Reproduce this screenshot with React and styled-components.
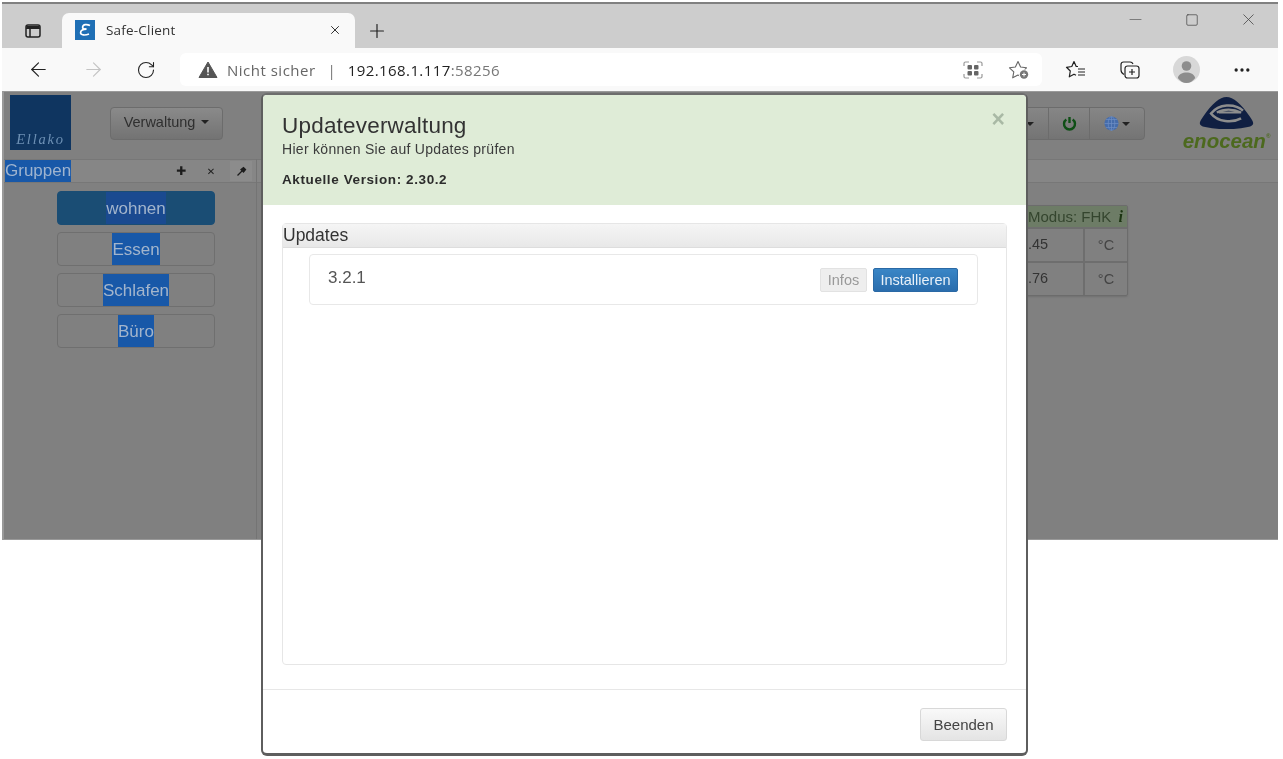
import styled, { createGlobalStyle } from "styled-components";
import { ArrowLeft, ArrowRight, RotateCw, Plus, X, Minus, Square, MoreHorizontal } from "lucide-react";

const GlobalStyle = createGlobalStyle`
  html, body { margin: 0; padding: 0; background: #fff; }
  body { font-family: "Liberation Sans", Arial, sans-serif; }
  * { box-sizing: border-box; }
`;

const groups = [
  { name: "wohnen", active: true },
  { name: "Essen" },
  { name: "Schlafen" },
  { name: "Büro" },
];

const SidebarIcon = () => (
  <svg width="16" height="14" viewBox="0 0 16 14" fill="none" stroke="#222" strokeWidth="1.5">
    <rect x="1" y="1" width="14" height="12" rx="2" />
    <path d="M1 4.2h14M5 4.2V13" />
    <path d="M1.5 2h13v2h-13z" fill="#222" stroke="none" />
  </svg>
);

const TabLogo = () => (
  <svg width="20" height="20" viewBox="0 0 20 20">
    <rect width="20" height="20" fill="#1f6fb5" />
    <path d="M15 5.5C12 4 8 4.2 7.600 7c-.2 1.600 1.400 2.300 3.900 2.200C8.200 9.300 5.500 10.300 5.600 12.800 5.700 15.300 10 15.600 14 14" fill="none" stroke="#fff" strokeWidth="1.700" />
  </svg>
);

const WarnIcon = () => (
  <svg width="20" height="17" viewBox="0 0 19 17">
    <path d="M9.500 1 18.500 16.500H.5z" fill="#555" stroke="#555" strokeLinejoin="round" />
    <path d="M9.500 6v5.500M9.500 12.800v1.500" stroke="#fff" strokeWidth="1.600" />
  </svg>
);

const ReaderIcon = () => (
  <svg width="20" height="18" viewBox="0 0 20 18" fill="none">
    <path d="M1 5V2.500C1 1.700 1.700 1 2.500 1H6M14 1h3.500c.8 0 1.500.7 1.500 1.500V5M1 13v2.500c0 .8.7 1.500 1.500 1.500H6M14 17h3.500c.8 0 1.500-.7 1.500-1.500V13" stroke="#999" strokeWidth="1.200" />
    <rect x="4.500" y="4" width="4.500" height="4.500" rx="1" fill="#666" />
    <rect x="11" y="4" width="4.500" height="4.500" rx="1" fill="#666" />
    <rect x="4.500" y="10" width="4.500" height="4.500" rx="1" fill="#666" />
    <rect x="11" y="10" width="4.500" height="4.500" rx="1" fill="#666" />
  </svg>
);

const StarAddIcon = () => (
  <svg width="22" height="20" viewBox="0 0 22 20" fill="none">
    <path d="M10 1.500 12.600 7 18.500 7.800 14.200 11.900 15.300 17.800 10 15 4.700 17.800 5.800 11.900 1.500 7.800 7.400 7z" stroke="#666" strokeWidth="1.100" strokeLinejoin="round" />
    <circle cx="16" cy="14.500" r="5.200" fill="#fff" />
    <circle cx="16" cy="14.500" r="4.200" fill="#777" />
    <path d="M14 14.500h4M16 12.500v4" stroke="#fff" strokeWidth="1" />
  </svg>
);

const FavoritesIcon = () => (
  <svg width="22" height="20" viewBox="0 0 22 20" fill="none" stroke="#222" strokeWidth="1.200" strokeLinejoin="round">
    <path d="M13 6.500H11.200L9 1.500 6.800 6.500 1.500 7.300 5.300 11 4.300 16.800 9 14.200 11 15.300" />
    <path d="M13 9h7M13 12h7M13 15h7" />
  </svg>
);

const CollectionsIcon = () => (
  <svg width="22" height="20" viewBox="0 0 22 20" fill="none" stroke="#222" strokeWidth="1.200">
    <path d="M5 14.500C3 13.500 2 12 2 10V4.500C2 3 3 2 4.500 2H11c1.500 0 2.500.7 3 2" />
    <rect x="6" y="6" width="14" height="12" rx="2.500" />
    <path d="M13 9v6M10 12h6" />
  </svg>
);

const Avatar = () => (
  <svg width="27" height="27" viewBox="0 0 27 27">
    <circle cx="13.500" cy="13.500" r="13.500" fill="#d8d8d8" />
    <circle cx="13.500" cy="10" r="4.800" fill="#8d8d8d" />
    <path d="M4.800 22c1-4 4.700-5.500 8.700-5.500s7.700 1.500 8.700 5.500c-2.200 3-5.400 5-8.700 5s-6.500-2-8.700-5z" fill="#8d8d8d" />
  </svg>
);

const PowerIcon = () => (
  <svg width="15" height="15" viewBox="0 0 15 15" fill="none" stroke="#0f4f16" strokeWidth="2.400">
    <path d="M4.300 3.500a5.500 5.500 0 1 0 6.400 0" />
    <path d="M7.500 1v6" />
  </svg>
);

const GlobeIcon = () => (
  <svg width="15" height="15" viewBox="0 0 15 15">
    <circle cx="7.500" cy="7.500" r="7" fill="#456cab" />
    <path d="M.5 7.500h14M7.500.5v14M2 3.500h11M2 11.500h11" stroke="#6f8fc4" strokeWidth=".7" />
    <ellipse cx="7.500" cy="7.500" rx="3.300" ry="7" fill="none" stroke="#6f8fc4" strokeWidth=".7" />
  </svg>
);

const PinIcon = () => (
  <svg width="11" height="11" viewBox="0 0 11 11" fill="none" stroke="#1c1c1c" strokeWidth="1.300">
    <path d="M1.500 9.500 6 5" />
    <path d="M5 3.500 7.500 6 9.500 3.500 7.500 1.500z" fill="#1c1c1c" />
  </svg>
);

const EnoceanMark = () => (
  <svg width="59" height="32" viewBox="0 0 60 33">
    <path d="M30 0C37 0 45 7 54 20c5 7 5 9-2 11-14 3-30 3-44 0-7-2-7-4-2-11C15 7 23 0 30 0z" fill="#101f42" />
    <path d="M47 14C38 6 22 7 14 17c7 9 22 10 31 5" fill="none" stroke="#8d8d8d" strokeWidth="2.600" />
    <path d="M20 16c7-4 17-4 25 0H22" fill="none" stroke="#8d8d8d" strokeWidth="2.200" />
  </svg>
);

export default function App() {
  return (
    <>
      <GlobalStyle />
      <Stage>
        <BrowserWindow>
          <TitleBar>
            <SidebarToggle><SidebarIcon /></SidebarToggle>
            <Tab>
              <TabLogo />
              <TabTitle>Safe-Client</TabTitle>
              <X size={14} strokeWidth={1.6} color="#222" />
            </Tab>
            <NewTab><Plus size={22} strokeWidth={1.3} color="#222" /></NewTab>
            <WindowControls>
              <Minus size={19} strokeWidth={1} color="#666" />
              <Square size={14} strokeWidth={1.1} color="#333" />
              <X size={19} strokeWidth={1} color="#444" />
            </WindowControls>
          </TitleBar>

          <Toolbar>
            <NavButtons>
              <ArrowLeft size={23} strokeWidth={1.2} color="#222" />
              <ArrowRight size={23} strokeWidth={1.2} color="#c4c4c4" />
              <RotateCw size={20} strokeWidth={1.3} color="#222" />
            </NavButtons>
            <AddressBar>
              <WarnIcon />
              <NotSecure>Nicht sicher</NotSecure>
              <Divider>|</Divider>
              <Url>192.168.1.117<UrlPort>:58256</UrlPort></Url>
              <AddressIcons>
                <ReaderIcon />
                <StarAddIcon />
              </AddressIcons>
            </AddressBar>
            <ToolIcons>
              <FavoritesIcon />
              <CollectionsIcon />
              <Avatar />
              <MoreHorizontal size={20} strokeWidth={2} color="#222" />
            </ToolIcons>
          </Toolbar>

          <Page>
            <PageHeader>
              <LogoBox><LogoText>Ellako</LogoText></LogoBox>
              <DropButton>Verwaltung <Caret /></DropButton>
              <HeaderRight>
                <ButtonGroup>
                  <GroupPart $w={36}><Caret /></GroupPart>
                  <GroupPart $w={41}><PowerIcon /></GroupPart>
                  <GroupPart $w={55}><GlobeIcon /><Caret /></GroupPart>
                </ButtonGroup>
                <Enocean>
                  <EnoceanMark />
                  <EnoceanText>enocean<sup>®</sup></EnoceanText>
                </Enocean>
              </HeaderRight>
            </PageHeader>

            <Columns>
              <GroupPanel>
                <PanelBar>
                  <Selected>Gruppen</Selected>
                  <PanelTools>
                    <ToolGlyph $bold>✚</ToolGlyph>
                    <ToolGlyph>✕</ToolGlyph>
                    <ToolGlyph $boxed><PinIcon /></ToolGlyph>
                  </PanelTools>
                </PanelBar>
                <GroupList>
                  {groups.map((g) => (
                    <GroupButton key={g.name} $active={g.active}>
                      <GroupLabel $active={g.active}>{g.name}</GroupLabel>
                    </GroupButton>
                  ))}
                </GroupList>
              </GroupPanel>

              <RightPanel>
                <RightBar />
                <Table>
                  <ModeRow>Modus: FHK <InfoMark>i</InfoMark></ModeRow>
                  <ValueRow><Value>.45</Value><UnitCell>°C</UnitCell></ValueRow>
                  <ValueRow><Value>.76</Value><UnitCell>°C</UnitCell></ValueRow>
                </Table>
              </RightPanel>
            </Columns>
          </Page>
        </BrowserWindow>

        <Modal>
          <ModalHeader>
            <CloseMark>×</CloseMark>
            <ModalTitle>Updateverwaltung</ModalTitle>
            <ModalSub>Hier können Sie auf Updates prüfen</ModalSub>
            <VersionLine>Aktuelle Version: 2.30.2</VersionLine>
          </ModalHeader>
          <ModalBody>
            <UpdatesPanel>
              <UpdatesHeading>Updates</UpdatesHeading>
              <UpdateItem>
                <VersionName>3.2.1</VersionName>
                <ItemActions>
                  <InfoButton>Infos</InfoButton>
                  <InstallButton>Installieren</InstallButton>
                </ItemActions>
              </UpdateItem>
            </UpdatesPanel>
          </ModalBody>
          <ModalFooter>
            <QuitButton>Beenden</QuitButton>
          </ModalFooter>
        </Modal>
      </Stage>
    </>
  );
}

const Stage = styled.div`
  position: relative;
  width: 1283px;
  height: 759px;
  overflow: hidden;
  background: #fff;
  padding: 2px 0 0 2px;
  filter: blur(0.35px);
`;

const BrowserWindow = styled.div`
  width: 1276px;
  height: 538px;
  display: flex;
  flex-direction: column;
  border-top: 2px solid #808080;
`;

const TitleBar = styled.div`
  height: 44px;
  background: #cdcdcd;
  display: flex;
  align-items: flex-end;
  padding-left: 23px;
`;

const SidebarToggle = styled.div`
  width: 37px;
  height: 35px;
  display: flex;
  align-items: center;
`;

const Tab = styled.div`
  width: 293px;
  height: 35px;
  background: #f9f9f9;
  border-radius: 7px 7px 0 0;
  display: flex;
  align-items: center;
  padding: 0 13px 2px 13px;
  color: #333;
`;

const TabTitle = styled.span`
  flex: 1;
  margin-left: 11px;
  font: 13.500px "Open Sans", sans-serif;
  letter-spacing: 0.2px;
`;

const NewTab = styled.div`
  width: 44px;
  height: 35px;
  display: flex;
  align-items: center;
  justify-content: center;
`;

const WindowControls = styled.div`
  margin-left: auto;
  align-self: flex-start;
  width: 168px;
  height: 31px;
  padding: 0 20px 0 16px;
  display: flex;
  align-items: center;
  justify-content: space-between;
`;

const Toolbar = styled.div`
  height: 43px;
  background: #f9f9f9;
  display: flex;
  align-items: center;
`;

const NavButtons = styled.div`
  width: 178px;
  padding: 0 24px 0 25px;
  display: flex;
  align-items: center;
  justify-content: space-between;
`;

const AddressBar = styled.div`
  width: 862px;
  height: 33px;
  background: #fff;
  border-radius: 6px;
  display: flex;
  align-items: center;
  padding: 0 12px 0 18px;
`;

const NotSecure = styled.span`
  margin-left: 9px;
  font: 15px "Open Sans", sans-serif;
  letter-spacing: 0.5px;
  color: #666;
`;

const Divider = styled.span`
  margin: 0 12px 0 12px;
  font: 15px "Open Sans", sans-serif;
  color: #777;
`;

const Url = styled.span`
  font: 15px "Open Sans", sans-serif;
  letter-spacing: 0.4px;
  color: #222;
`;

const UrlPort = styled.span`
  color: #777;
`;

const AddressIcons = styled.div`
  margin-left: auto;
  width: 67px;
  display: flex;
  align-items: center;
  justify-content: space-between;
`;

const ToolIcons = styled.div`
  flex: 1;
  padding-left: 23px;
  display: flex;
  align-items: center;
  gap: 32px;
`;

const Page = styled.div`
  flex: 1;
  background: #808080;
  border-top: 1px solid #9a9a9a;
  border-bottom: 1px solid #999;
  border-left: 2px solid #999;
  display: flex;
  flex-direction: column;
  min-height: 0;
`;

const PageHeader = styled.div`
  height: 67px;
  padding: 3px 8px 0 6px;
  display: flex;
  align-items: flex-start;
`;

const LogoBox = styled.div`
  width: 61px;
  height: 55px;
  background: #0f3560;
  display: flex;
  align-items: flex-end;
  justify-content: center;
  padding-bottom: 2px;
`;

const LogoText = styled.span`
  font: italic 14.500px "Liberation Serif", serif;
  letter-spacing: 1.800px;
  color: #6d90b4;
`;

const DropButton = styled.div`
  margin: 12px 0 0 39px;
  width: 113px;
  height: 33px;
  border: 1px solid #6c6c6c;
  border-radius: 4px;
  background: linear-gradient(#8a8a8a, #737373);
  display: flex;
  align-items: center;
  justify-content: center;
  gap: 6px;
  padding-bottom: 3px;
  font-size: 14.500px;
  color: #2f2f2f;
`;

const Caret = styled.span`
  display: inline-block;
  border-top: 4px solid #222;
  border-left: 4px solid transparent;
  border-right: 4px solid transparent;
`;

const HeaderRight = styled.div`
  margin-left: auto;
  display: flex;
  align-items: flex-start;
`;

const ButtonGroup = styled.div`
  margin-top: 12px;
  height: 33px;
  display: flex;
  border: 1px solid #6c6c6c;
  border-radius: 4px;
  background: linear-gradient(#868686, #747474);
`;

const GroupPart = styled.div`
  width: ${(p) => p.$w}px;
  display: flex;
  align-items: center;
  justify-content: center;
  gap: 3px;
  & + & {
    border-left: 1px solid #6c6c6c;
  }
`;

const Enocean = styled.div`
  width: 87px;
  margin-left: 38px;
  display: flex;
  flex-direction: column;
  align-items: center;
  padding-top: 2px;
`;

const EnoceanText = styled.div`
  margin-top: 2px;
  font: italic bold 20.500px "Liberation Sans", sans-serif;
  line-height: 19px;
  color: #4c691e;
  white-space: nowrap;
  sup {
    font-size: 6px;
    vertical-align: top;
    line-height: 10px;
  }
`;

const Columns = styled.div`
  flex: 1;
  display: flex;
  min-height: 0;
`;

const GroupPanel = styled.div`
  width: 253px;
  border-right: 1px solid #747474;
`;

const PanelBar = styled.div`
  height: 24px;
  background: #868686;
  border-top: 1px solid #777;
  border-bottom: 1px solid #777;
  display: flex;
  align-items: center;
  padding-left: 1px;
`;

const Selected = styled.span`
  background: #1858a8;
  color: #9fb4cf;
  font-size: 17px;
  line-height: 22px;
  width: 66px;
  white-space: nowrap;
  overflow: hidden;
`;

const PanelTools = styled.div`
  margin-left: auto;
  display: flex;
  align-items: center;
  gap: 8px;
  padding-right: 4px;
`;

const ToolGlyph = styled.span`
  width: 22px;
  height: 20px;
  display: flex;
  align-items: center;
  justify-content: center;
  font: ${(p) => (p.$bold ? "12px" : "10px")} "DejaVu Sans", sans-serif;
  color: #1c1c1c;
  background: ${(p) => (p.$boxed ? "#8c8c8c" : "transparent")};
`;

const GroupList = styled.div`
  margin: 8px 41px 0 53px;
  display: flex;
  flex-direction: column;
  gap: 7px;
`;

const GroupButton = styled.div`
  height: 34px;
  border: 1px solid ${(p) => (p.$active ? "#1a4d74" : "#6f6f6f")};
  border-radius: 4px;
  background: ${(p) => (p.$active ? "#1a4d74" : "#808080")};
  display: flex;
  align-items: stretch;
  justify-content: center;
`;

const GroupLabel = styled.span`
  background: ${(p) => (p.$active ? "#1a4a90" : "#1858a8")};
  color: #a3b5cc;
  font-size: 17px;
  line-height: 33px;
`;

const RightPanel = styled.div`
  flex: 1;
  display: flex;
  flex-direction: column;
  align-items: flex-end;
`;

const RightBar = styled.div`
  width: 100%;
  height: 24px;
  background: #868686;
  border-top: 1px solid #777;
  border-bottom: 1px solid #777;
`;

const Table = styled.div`
  width: 340px;
  margin: 22px 150px 0 0;
  border: 1px solid #6c6c6c;
  border-radius: 2px;
  box-shadow: 0 1px 2px #707070;
`;

const ModeRow = styled.div`
  height: 21px;
  background: #6d7c66;
  text-align: right;
  padding-right: 4px;
  font-size: 15px;
  line-height: 21px;
  color: #34452e;
`;

const InfoMark = styled.b`
  font: italic bold 16px "Liberation Serif", serif;
  color: #1c3412;
  margin-left: 3px;
`;

const ValueRow = styled.div`
  height: 34px;
  display: flex;
  border-top: 2px solid #6e6e6e;
`;

const Value = styled.div`
  flex: 1;
  padding-left: 239px;
  font-size: 14.500px;
  line-height: 30px;
  color: #333;
`;

const UnitCell = styled.div`
  width: 44px;
  border-left: 2px solid #6e6e6e;
  text-align: center;
  font-size: 14.500px;
  line-height: 32px;
  color: #444;
`;

const Modal = styled.div`
  position: absolute;
  left: 261px;
  top: 93px;
  width: 767px;
  height: 663px;
  background: #fff;
  border: 2px solid #5e5e5e;
  border-top-color: #6d6d6d;
  border-bottom-width: 3px;
  border-radius: 6px;
  display: flex;
  flex-direction: column;
  overflow: hidden;
`;

const ModalHeader = styled.div`
  position: relative;
  height: 110px;
  background: #dfecd7;
  padding: 18px 19px 0;
  color: #2f3a2f;
`;

const CloseMark = styled.span`
  position: absolute;
  top: 14px;
  right: 21px;
  font: bold 23px/21px "Liberation Sans", sans-serif;
  color: #a9b9a5;
`;

const ModalTitle = styled.h4`
  margin: 0;
  font-size: 22.500px;
  font-weight: 400;
  letter-spacing: 0.2px;
  line-height: 26px;
  color: #333;
`;

const ModalSub = styled.div`
  margin-top: 3px;
  font-size: 14px;
  letter-spacing: 0.3px;
  line-height: 15px;
  color: #3b3b3b;
`;

const VersionLine = styled.div`
  margin-top: 15px;
  font-size: 13.500px;
  font-weight: 700;
  letter-spacing: 0.6px;
  line-height: 15px;
  color: #2c2c2c;
`;

const ModalBody = styled.div`
  flex: 1;
  padding: 18px 19px 24px;
  display: flex;
  border-bottom: 1px solid #e7e7e7;
`;

const UpdatesPanel = styled.div`
  flex: 1;
  border: 1px solid #e6e6e6;
  border-radius: 4px;
`;

const UpdatesHeading = styled.div`
  height: 24px;
  background: linear-gradient(#f5f5f5, #e8e8e8);
  border-bottom: 1px solid #ddd;
  padding-left: 0;
  font-size: 17.500px;
  line-height: 22px;
  color: #333;
`;

const UpdateItem = styled.div`
  margin: 6px 28px 0 26px;
  height: 51px;
  border: 1px solid #e8e8e8;
  border-radius: 4px;
  display: flex;
  align-items: center;
  justify-content: space-between;
  padding: 0 19px 0 18px;
`;

const VersionName = styled.span`
  font-size: 17px;
  color: #555;
  margin-bottom: 4px;
`;

const ItemActions = styled.div`
  display: flex;
  gap: 6px;
`;

const InfoButton = styled.div`
  width: 47px;
  height: 24px;
  background: #eeeeee;
  border: 1px solid #e2e2e2;
  border-radius: 2px;
  text-align: center;
  font-size: 14.500px;
  line-height: 22px;
  color: #999;
`;

const InstallButton = styled.div`
  width: 85px;
  height: 24px;
  background: linear-gradient(#3a86c6, #2a6dad);
  border: 1px solid #2a69a5;
  border-radius: 2px;
  text-align: center;
  font-size: 14.500px;
  line-height: 22px;
  color: #e8f0f8;
`;

const ModalFooter = styled.div`
  height: 63px;
  display: flex;
  align-items: flex-start;
  justify-content: flex-end;
  padding: 18px 19px 0 0;
`;

const QuitButton = styled.div`
  width: 87px;
  height: 33px;
  background: linear-gradient(#f9f9f9, #e4e4e4);
  border: 1px solid #d8d8d8;
  border-radius: 3px;
  text-align: center;
  font-size: 15px;
  line-height: 32px;
  color: #444;
`;
